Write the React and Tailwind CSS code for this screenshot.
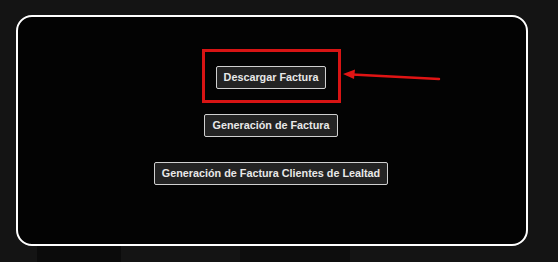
const btn =
  "bg-[#232323] border border-[#d0d0d0] rounded-[2px] text-[#e8e8e8] font-bold text-[10.8px] leading-none px-[7px] h-[23px] flex items-center whitespace-nowrap";

export default function App() {
  return (
    <div
      className="relative w-[558px] h-[262px] bg-[#141414] overflow-hidden"
      style={{ fontFamily: '"Liberation Sans", Arial, sans-serif' }}
    >
      {/* faint background shapes */}
      <div className="absolute left-[37px] top-[105px] w-[84px] h-[157px] bg-[#0b0b0b]" />
      <div className="absolute left-[240px] top-[208px] w-[110px] h-[54px] bg-[#0d0d0d]" />

      <div className="absolute left-[16px] top-[15px] w-[512px] h-[231px] border-2 border-white rounded-[16px] bg-[#030303] flex flex-col items-center pt-[49px] gap-[26px] pr-[2px]">
        <div className="relative">
          <button className={btn}>Descargar Factura</button>
          {/* annotation */}
          <div className="absolute -left-[14px] -top-[17px] -right-[15px] -bottom-[14px] border-[3px] border-[#d81414] pointer-events-none" />
        </div>
        <button className={`${btn} -mt-[1px]`}>Generación de Factura</button>
        <button className={`${btn} -mt-[1px]`}>Generación de Factura Clientes de Lealtad</button>
      </div>

      <svg className="absolute left-[340px] top-[66px]" width="104" height="20" viewBox="0 0 104 20">
        <line x1="99" y1="13" x2="12" y2="8.5" stroke="#e01414" strokeWidth="2.5" strokeLinecap="round" />
        <polygon points="3,8 15,3.5 14,13" fill="#e01414" />
      </svg>
    </div>
  );
}
